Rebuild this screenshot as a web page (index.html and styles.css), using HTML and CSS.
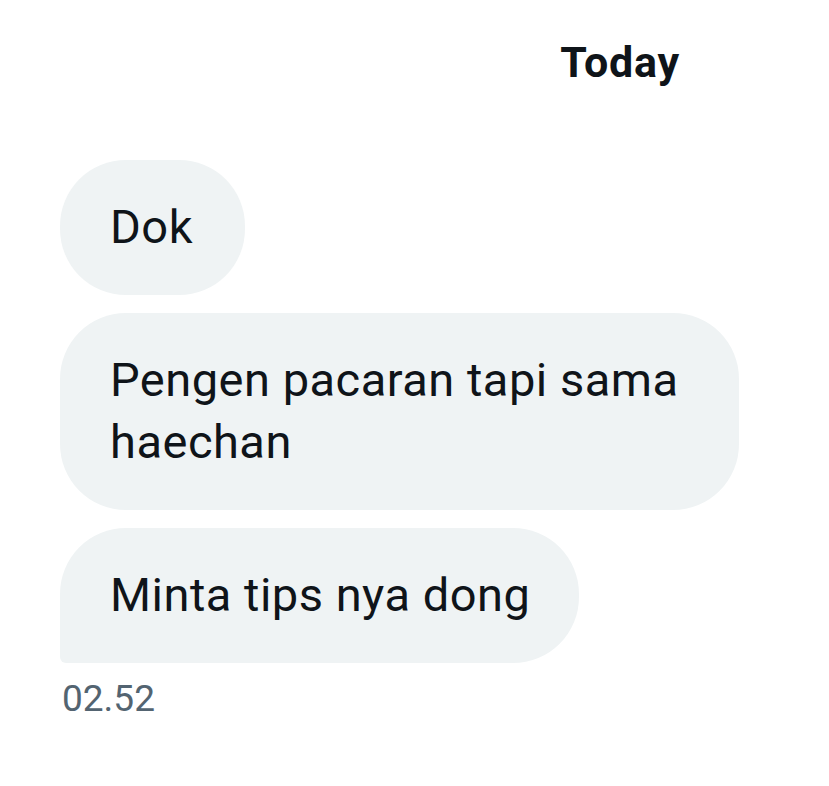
FILE: index.html
```html
<!DOCTYPE html>
<html lang="id">
<head>
<meta charset="utf-8">
<title>DM</title>
<link rel="stylesheet" href="styles.css">
</head>
<body>
<div class="page">
  <div class="day"><span class="day-label">Today</span></div>
  <div class="thread">
    <div class="bubble">Dok</div>
    <div class="bubble wrapped">Pengen pacaran tapi sama<br>haechan</div>
    <div class="bubble last">Minta tips nya dong</div>
    <div class="time">02.52</div>
  </div>
</div>
</body>
</html>
```

FILE: styles.css
```css
html, body {
  margin: 0;
  padding: 0;
  background: #ffffff;
}
body {
  font-family: Roboto, "Liberation Sans", sans-serif;
  color: #0f1419;
}
.page {
  width: 829px;
  height: 786px;
  box-sizing: border-box;
}
.day {
  display: flex;
  justify-content: flex-end;
  padding: 37px 149px 0 0;
  height: 160px;
  box-sizing: border-box;
}
.day-label {
  font-size: 43px;
  font-weight: 700;
  letter-spacing: 0.8px;
  line-height: 50px;
}
.thread {
  display: flex;
  flex-direction: column;
  align-items: flex-start;
  gap: 18px;
  padding-left: 60px;
}
.bubble {
  background: #eff3f4;
  border-radius: 66px;
  padding: 36px 52px 37px 50px;
  font-size: 47px;
  letter-spacing: 0.5px;
  line-height: 62px;
}
.bubble.wrapped {
  padding-right: 60px;
}
.bubble.last {
  padding-right: 49px;
  border-bottom-left-radius: 6px;
}
.time {
  padding-left: 2px;
  font-size: 37px;
  line-height: 36px;
  color: #536471;
}
```
